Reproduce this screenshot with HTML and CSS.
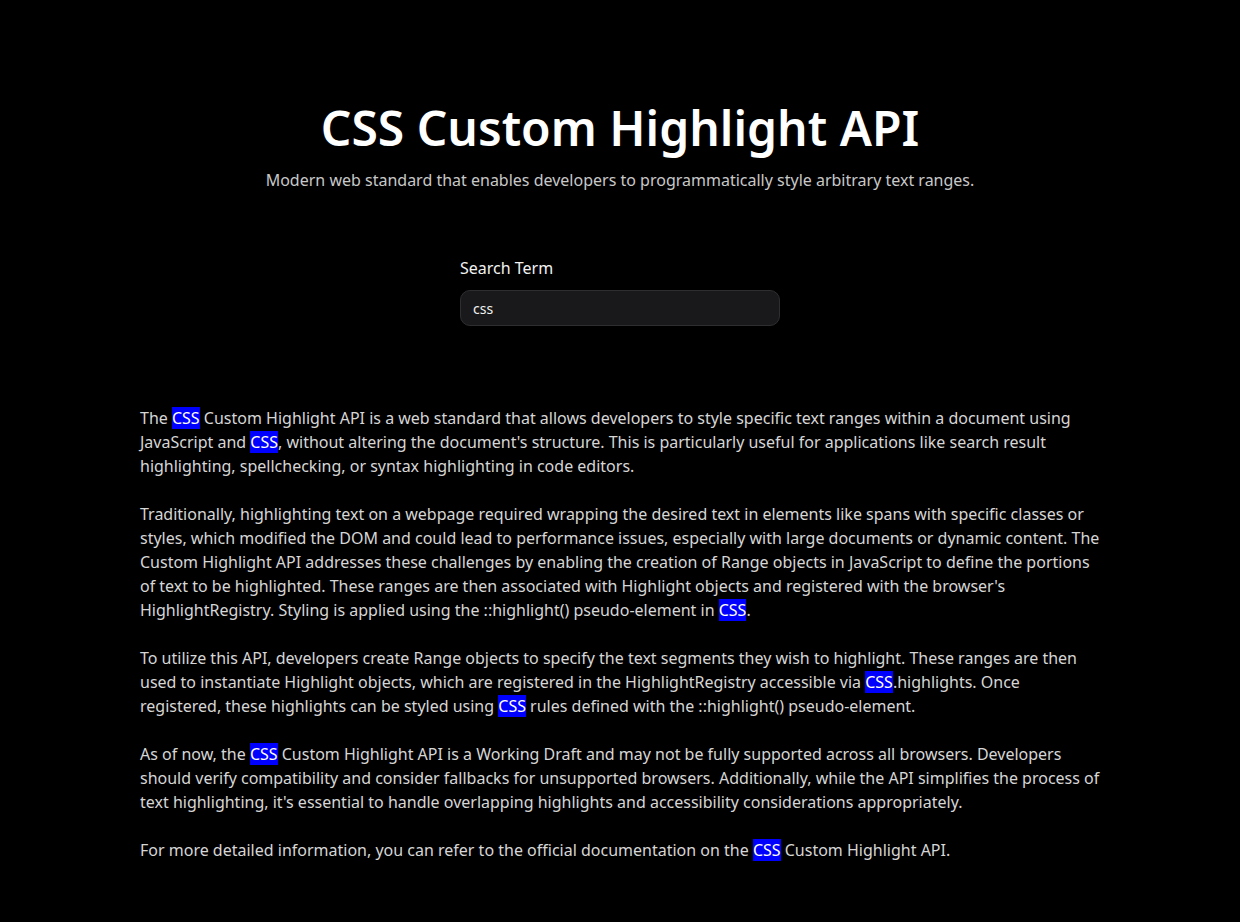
FILE: index.html
```html
<!DOCTYPE html>
<html lang="en">
<head>
<meta charset="utf-8">
<title>CSS Custom Highlight API</title>
<link rel="stylesheet" href="styles.css">
</head>
<body>
<main class="page">
  <header class="hero">
    <h1 class="title">CSS Custom Highlight API</h1>
    <p class="subtitle">Modern web standard that enables developers to programmatically style arbitrary text ranges.</p>
  </header>
  <section class="search">
    <label class="search-label" for="term">Search Term</label>
    <input class="search-input" id="term" type="text" value="css">
  </section>
  <article class="content">
    <p>The <mark class="hl">CSS</mark> Custom Highlight API is a web standard that allows developers to style specific text ranges within a document using JavaScript and <mark class="hl">CSS</mark>, without altering the document's structure. This is particularly useful for applications like search result highlighting, spellchecking, or syntax highlighting in code editors.</p>
    <p>Traditionally, highlighting text on a webpage required wrapping the desired text in elements like spans with specific classes or styles, which modified the DOM and could lead to performance issues, especially with large documents or dynamic content. The Custom Highlight API addresses these challenges by enabling the creation of Range objects in JavaScript to define the portions of text to be highlighted. These ranges are then associated with Highlight objects and registered with the browser's HighlightRegistry. Styling is applied using the ::highlight() pseudo-element in <mark class="hl">CSS</mark>.</p>
    <p>To utilize this API, developers create Range objects to specify the text segments they wish to highlight. These ranges are then used to instantiate Highlight objects, which are registered in the HighlightRegistry accessible via <mark class="hl">CSS</mark>.highlights. Once registered, these highlights can be styled using <mark class="hl">CSS</mark> rules defined with the ::highlight() pseudo-element.</p>
    <p>As of now, the <mark class="hl">CSS</mark> Custom Highlight API is a Working Draft and may not be fully supported across all browsers. Developers should verify compatibility and consider fallbacks for unsupported browsers. Additionally, while the API simplifies the process of text highlighting, it's essential to handle overlapping highlights and accessibility considerations appropriately.</p>
    <p>For more detailed information, you can refer to the official documentation on the <mark class="hl">CSS</mark> Custom Highlight API.</p>
  </article>
</main>
</body>
</html>
```
FILE: styles.css
```css
html, body {
  margin: 0;
  padding: 0;
  background: #000;
}
body {
  font-family: "Noto Sans", "Open Sans", sans-serif;
  color: #d6d6d6;
  font-size: 16px;
  line-height: 24px;
}
.page {
  max-width: 960px;
  margin: 0 auto;
  padding: 96px 0 40px;
}
.hero {
  text-align: center;
}
.title {
  margin: 0;
  font-size: 48px;
  font-weight: 600;
  line-height: 64px;
  color: #fff;
}
.subtitle {
  margin: 8px 0 0;
  color: #c8c8c8;
}
.search {
  width: 320px;
  margin: 64px auto 0;
  display: flex;
  flex-direction: column;
  gap: 10px;
}
.search-label {
  color: #f2f2f2;
  font-size: 16px;
  line-height: 24px;
}
.search-input {
  box-sizing: border-box;
  height: 36px;
  width: 100%;
  padding: 0 12px;
  background: #19191b;
  border: 1px solid #2e2e31;
  border-radius: 10px;
  color: #f0f0f0;
  font-family: "Noto Sans", sans-serif;
  font-size: 14px;
  outline: none;
}
.content {
  margin-top: 80px;
}
.content p {
  margin: 0 0 24px;
}
.hl {
  background: #0000ff;
  color: #fff;
}
```
